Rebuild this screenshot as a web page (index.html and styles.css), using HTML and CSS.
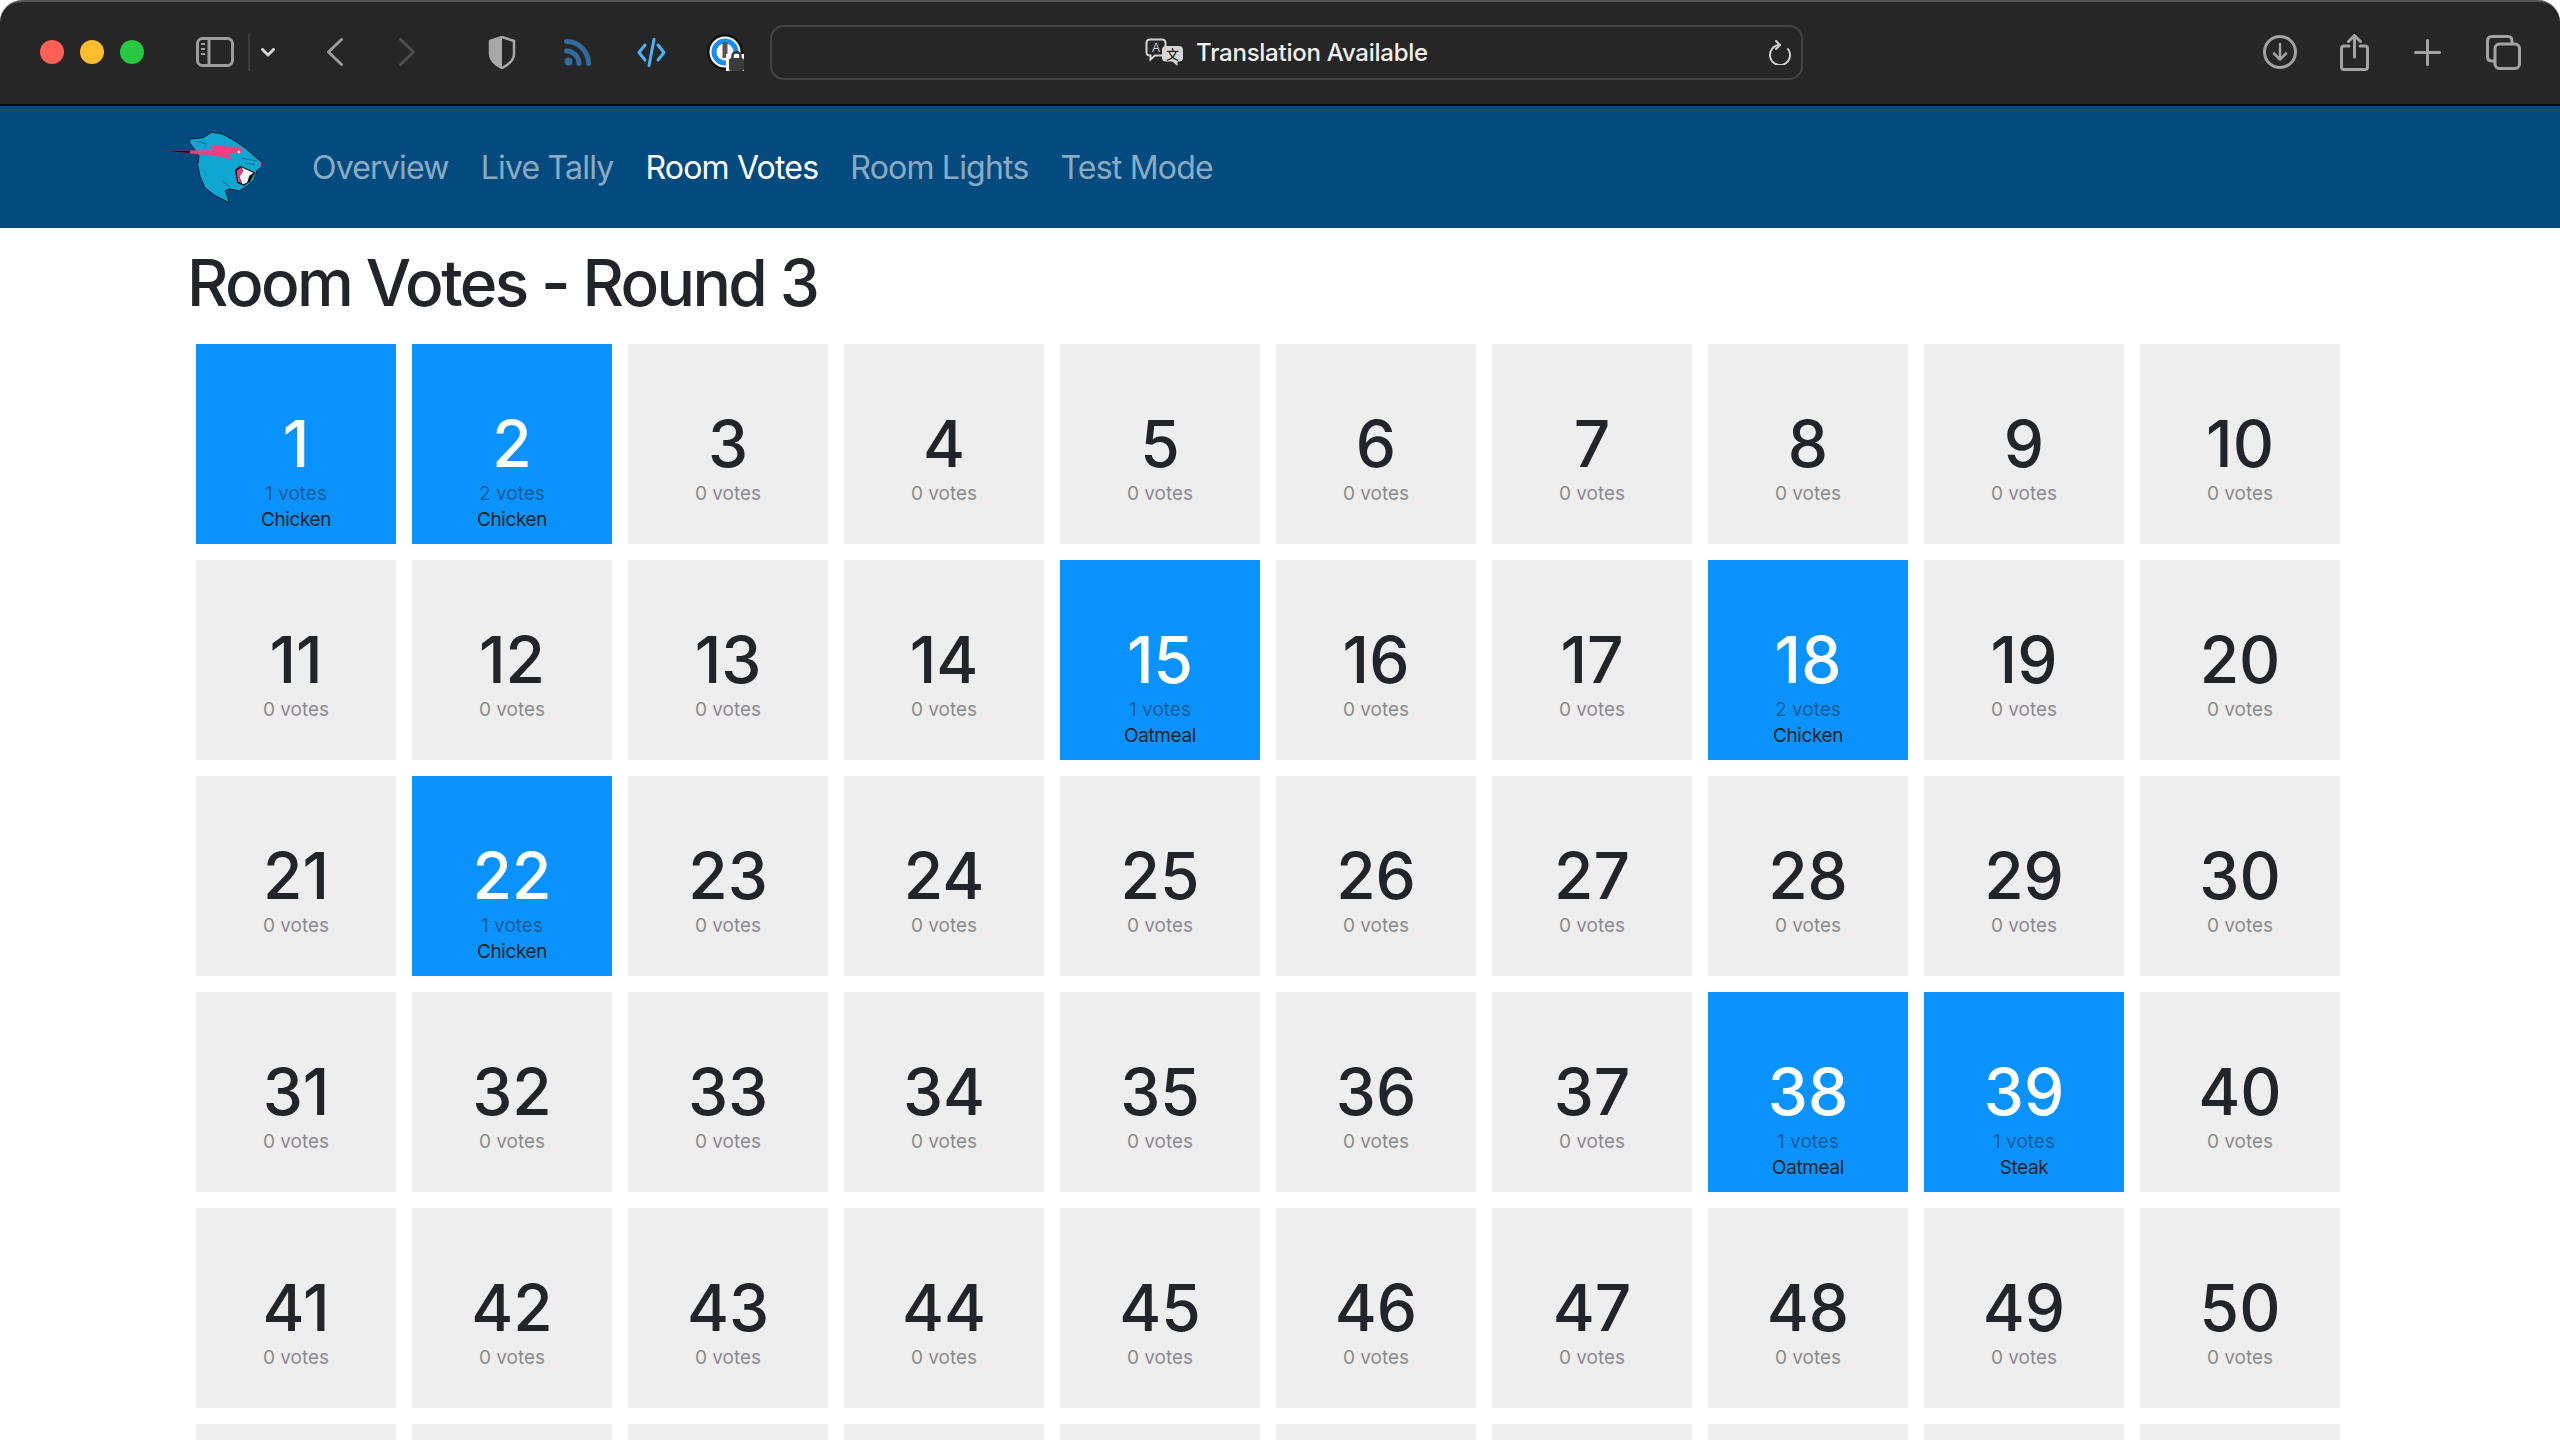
FILE: index.html
```html
<!DOCTYPE html>
<html lang="en">
    <head>
        <meta charset="UTF-8" />
        <title>Room Votes - Round 3</title>
        <link rel="stylesheet" href="styles.css">
    </head>
    <body>
        <header class="browser-bar">
            <div class="lights">
                <span class="light light-red"></span>
                <span class="light light-yellow"></span>
                <span class="light light-green"></span>
            </div>
            <svg class="icon-sidebar" width="38" height="30" viewBox="0 0 38 30" fill="none" stroke="#9c9c9c" stroke-width="3">
                <rect x="1.5" y="1.5" width="35" height="27" rx="5"/>
                <path d="M13 2V28"/>
                <path d="M5 7H9M5 12H9M5 17H9" stroke-width="2"/>
            </svg>
            <span class="bar-sep"></span>
            <svg class="icon-chevron" width="14" height="9" viewBox="0 0 14 9" fill="none" stroke="#d4d4d4" stroke-width="3" stroke-linecap="round" stroke-linejoin="round">
                <path d="M1.5 1.5L7 7L12.5 1.5"/>
            </svg>
            <svg class="icon-back" width="16" height="28" viewBox="0 0 16 28" fill="none" stroke="#9c9c9c" stroke-width="3" stroke-linecap="round" stroke-linejoin="round">
                <path d="M14.5 1.5L1.5 14L14.5 26.5"/>
            </svg>
            <svg class="icon-forward" width="16" height="28" viewBox="0 0 16 28" fill="none" stroke="#4d4d4d" stroke-width="3" stroke-linecap="round" stroke-linejoin="round">
                <path d="M1.5 1.5L14.5 14L1.5 26.5"/>
            </svg>
            <svg class="icon-shield" width="28" height="33" viewBox="0 0 28 33">
                <path d="M14 1L26 5V18C26 25 20 29 14 32C8 29 2 25 2 18V5Z" fill="none" stroke="#a8a8a8" stroke-width="2.5" stroke-linejoin="round"/>
                <path d="M14 1L2 5V18C2 25 8 29 14 32Z" fill="#a8a8a8"/>
            </svg>
            <svg class="icon-rss" width="27" height="27" viewBox="0 0 27 27" fill="none" stroke="#2f6b9c" stroke-width="5" stroke-linecap="round">
                <circle cx="4.5" cy="22.5" r="4" fill="#2f6b9c" stroke="none"/>
                <path d="M2.5 12A12.5 12.5 0 0 1 15 24.5"/>
                <path d="M2.5 2.5A22 22 0 0 1 24.5 24.5"/>
            </svg>
            <svg class="icon-code" width="29" height="29" viewBox="0 0 29 29" fill="none" stroke="#4ab4f5" stroke-width="3" stroke-linecap="round" stroke-linejoin="round">
                <path d="M8 7L2 14.5L8 22"/>
                <path d="M17 1.5L12 27.5"/>
                <path d="M21 7L27 14.5L21 22"/>
            </svg>
            <svg class="icon-onepass" width="37" height="37" viewBox="0 0 37 37">
                <circle cx="18" cy="18" r="18" fill="#111"/>
                <circle cx="18" cy="18" r="15.5" fill="#fff"/>
                <circle cx="18" cy="18" r="11" fill="#fff" stroke="#1b8cf2" stroke-width="5"/>
                <rect x="15.5" y="8" width="5" height="16" fill="#555"/>
                <path d="M19 37V20H37V37Z" fill="#fff"/>
                <rect x="22" y="24" width="15" height="13" rx="2.5" fill="#3a3a3a"/>
                <path d="M25.5 25V22a4 4 0 0 1 8 0V25" fill="none" stroke="#3a3a3a" stroke-width="2.5"/>
            </svg>
            <div class="url-bar">
                <span></span>
                <div class="url-text">
                    <svg width="39" height="28" viewBox="0 0 39 28">
                        <path d="M5 1.5H17C19 1.5 20.5 3 20.5 5V14C20.5 16 19 17.5 17 17.5H10L5.5 21.5V17.5H5C3 17.5 1.5 16 1.5 14V5C1.5 3 3 1.5 5 1.5Z" fill="#262626" stroke="#d0d0d0" stroke-width="2"/>
                        <text x="11" y="14" class="glyph-a">A</text>
                        <path d="M21 8H34C36.5 8 38 9.5 38 12V20C38 22.5 36.5 23.5 34 23.5H32.5V28L27.5 23.5H21C18.5 23.5 17 22.5 17 20V12C17 9.5 18.5 8 21 8Z" fill="#d6d6d6"/>
                        <text x="27.5" y="20.5" class="glyph-zh">文</text>
                    </svg>
                    <span>Translation Available</span>
                </div>
                <svg class="icon-reload" width="24" height="25" viewBox="0 0 24 25" fill="none" stroke="#d0d0d0" stroke-width="2" stroke-linecap="round" stroke-linejoin="round">
                    <path d="M13 5A10 10 0 1 0 21 9"/>
                    <path d="M9 1L13 5L9 9"/>
                </svg>
            </div>
            <svg class="icon-download" width="34" height="34" viewBox="0 0 34 34" fill="none" stroke="#a3a3a3" stroke-width="3" stroke-linecap="round" stroke-linejoin="round">
                <circle cx="17" cy="17" r="15.5"/>
                <path d="M17 9V24M11 18.5L17 24.5L23 18.5" stroke-width="2.5"/>
            </svg>
            <svg class="icon-share" width="29" height="37" viewBox="0 0 29 37" fill="none" stroke="#a3a3a3" stroke-width="3" stroke-linecap="round" stroke-linejoin="round">
                <path d="M9 12H4C2.5 12 1.5 13 1.5 14.5V33C1.5 34.5 2.5 35.5 4 35.5H25C26.5 35.5 27.5 34.5 27.5 33V14.5C27.5 13 26.5 12 25 12H20"/>
                <path d="M14.5 23V2M8.5 7.5L14.5 1.5L20.5 7.5"/>
            </svg>
            <svg class="icon-plus" width="27" height="27" viewBox="0 0 27 27" fill="none" stroke="#a3a3a3" stroke-width="3" stroke-linecap="round">
                <path d="M13.5 1.5V25.5M1.5 13.5H25.5"/>
            </svg>
            <svg class="icon-tabs" width="35" height="35" viewBox="0 0 35 35" fill="none" stroke="#a3a3a3" stroke-width="3" stroke-linejoin="round">
                <path d="M8 26H6C3 26 1.5 24.5 1.5 22V6C1.5 3 3 1.5 6 1.5H22C24.5 1.5 26 3 26 6V8"/>
                <rect x="9" y="9" width="24.5" height="24.5" rx="4.5"/>
            </svg>
        </header>

        <nav class="site-nav">
            <svg class="logo" width="104" height="75" viewBox="33 85 312 225">
                <path d="M118 112L160 108L185 92L215 96L250 115L285 138L315 165L338 183L335 195L320 208L312 235L293 252L268 268L240 262L226 266L238 303L195 282L165 258L150 225L143 190L147 165L135 145L120 125Z" fill="#0fa6d1" stroke="#07202e" stroke-width="3" stroke-linejoin="round"/>
                <path d="M135 118L168 126L165 140" fill="none" stroke="#07506e" stroke-width="2"/>
                <path d="M36 147L195 146L178 131L273 137L274 156L234 156L250 174L205 164Z" fill="#f0407f"/>
                <path d="M36 147L120 147L120 155Z" fill="#1a1020"/>
                <circle cx="267" cy="151" r="4" fill="#fff"/>
                <path d="M275 170L320 178M285 185L315 188M220 240L240 256" fill="none" stroke="#07506e" stroke-width="2"/>
                <path d="M255 205L270 192L315 212L300 240L282 252L262 245Z" fill="#111"/>
                <path d="M273 197L310 213L298 222L291 243L278 248L268 225L280 207Z" fill="#fff"/>
                <path d="M260 207L272 198L279 207L268 225L275 245L264 240Z" fill="#ec3f80"/>
                <path d="M330 180L340 186L332 193Z" fill="#c5255f"/>
            </svg>
            <a class="nav-link" href="#">Overview</a>
            <a class="nav-link" href="#">Live Tally</a>
            <a class="nav-link active" href="#">Room Votes</a>
            <a class="nav-link" href="#">Room Lights</a>
            <a class="nav-link" href="#">Test Mode</a>
        </nav>

        <main class="content">
            <h1>Room Votes - Round 3</h1>
            <div class="rooms">
                <div class="room voted"><div class="room-num">1</div><div class="room-votes">1 votes</div><div class="room-food">Chicken</div></div>
                <div class="room voted"><div class="room-num">2</div><div class="room-votes">2 votes</div><div class="room-food">Chicken</div></div>
                <div class="room"><div class="room-num">3</div><div class="room-votes">0 votes</div></div>
                <div class="room"><div class="room-num">4</div><div class="room-votes">0 votes</div></div>
                <div class="room"><div class="room-num">5</div><div class="room-votes">0 votes</div></div>
                <div class="room"><div class="room-num">6</div><div class="room-votes">0 votes</div></div>
                <div class="room"><div class="room-num">7</div><div class="room-votes">0 votes</div></div>
                <div class="room"><div class="room-num">8</div><div class="room-votes">0 votes</div></div>
                <div class="room"><div class="room-num">9</div><div class="room-votes">0 votes</div></div>
                <div class="room"><div class="room-num">10</div><div class="room-votes">0 votes</div></div>
                <div class="room"><div class="room-num">11</div><div class="room-votes">0 votes</div></div>
                <div class="room"><div class="room-num">12</div><div class="room-votes">0 votes</div></div>
                <div class="room"><div class="room-num">13</div><div class="room-votes">0 votes</div></div>
                <div class="room"><div class="room-num">14</div><div class="room-votes">0 votes</div></div>
                <div class="room voted"><div class="room-num">15</div><div class="room-votes">1 votes</div><div class="room-food">Oatmeal</div></div>
                <div class="room"><div class="room-num">16</div><div class="room-votes">0 votes</div></div>
                <div class="room"><div class="room-num">17</div><div class="room-votes">0 votes</div></div>
                <div class="room voted"><div class="room-num">18</div><div class="room-votes">2 votes</div><div class="room-food">Chicken</div></div>
                <div class="room"><div class="room-num">19</div><div class="room-votes">0 votes</div></div>
                <div class="room"><div class="room-num">20</div><div class="room-votes">0 votes</div></div>
                <div class="room"><div class="room-num">21</div><div class="room-votes">0 votes</div></div>
                <div class="room voted"><div class="room-num">22</div><div class="room-votes">1 votes</div><div class="room-food">Chicken</div></div>
                <div class="room"><div class="room-num">23</div><div class="room-votes">0 votes</div></div>
                <div class="room"><div class="room-num">24</div><div class="room-votes">0 votes</div></div>
                <div class="room"><div class="room-num">25</div><div class="room-votes">0 votes</div></div>
                <div class="room"><div class="room-num">26</div><div class="room-votes">0 votes</div></div>
                <div class="room"><div class="room-num">27</div><div class="room-votes">0 votes</div></div>
                <div class="room"><div class="room-num">28</div><div class="room-votes">0 votes</div></div>
                <div class="room"><div class="room-num">29</div><div class="room-votes">0 votes</div></div>
                <div class="room"><div class="room-num">30</div><div class="room-votes">0 votes</div></div>
                <div class="room"><div class="room-num">31</div><div class="room-votes">0 votes</div></div>
                <div class="room"><div class="room-num">32</div><div class="room-votes">0 votes</div></div>
                <div class="room"><div class="room-num">33</div><div class="room-votes">0 votes</div></div>
                <div class="room"><div class="room-num">34</div><div class="room-votes">0 votes</div></div>
                <div class="room"><div class="room-num">35</div><div class="room-votes">0 votes</div></div>
                <div class="room"><div class="room-num">36</div><div class="room-votes">0 votes</div></div>
                <div class="room"><div class="room-num">37</div><div class="room-votes">0 votes</div></div>
                <div class="room voted"><div class="room-num">38</div><div class="room-votes">1 votes</div><div class="room-food">Oatmeal</div></div>
                <div class="room voted"><div class="room-num">39</div><div class="room-votes">1 votes</div><div class="room-food">Steak</div></div>
                <div class="room"><div class="room-num">40</div><div class="room-votes">0 votes</div></div>
                <div class="room"><div class="room-num">41</div><div class="room-votes">0 votes</div></div>
                <div class="room"><div class="room-num">42</div><div class="room-votes">0 votes</div></div>
                <div class="room"><div class="room-num">43</div><div class="room-votes">0 votes</div></div>
                <div class="room"><div class="room-num">44</div><div class="room-votes">0 votes</div></div>
                <div class="room"><div class="room-num">45</div><div class="room-votes">0 votes</div></div>
                <div class="room"><div class="room-num">46</div><div class="room-votes">0 votes</div></div>
                <div class="room"><div class="room-num">47</div><div class="room-votes">0 votes</div></div>
                <div class="room"><div class="room-num">48</div><div class="room-votes">0 votes</div></div>
                <div class="room"><div class="room-num">49</div><div class="room-votes">0 votes</div></div>
                <div class="room"><div class="room-num">50</div><div class="room-votes">0 votes</div></div>
                <div class="room"></div>
                <div class="room"></div>
                <div class="room"></div>
                <div class="room"></div>
                <div class="room"></div>
                <div class="room"></div>
                <div class="room"></div>
                <div class="room"></div>
                <div class="room"></div>
                <div class="room"></div>
            </div>
        </main>
    </body>
</html>
```

FILE: styles.css
```css
html,
body {
    margin: 0;
    height: 1440px;
    overflow: hidden;
    background: #fff;
    font-family: Inter, "Noto Sans", sans-serif;
    color: #212529;
}

/* browser chrome */
.browser-bar {
    display: flex;
    align-items: center;
    box-sizing: border-box;
    height: 106px;
    padding: 0 0 2px 40px;
    background: #262626;
    border-top: 2px solid #555;
    border-bottom: 2px solid #0a0a0a;
    border-radius: 22px 22px 0 0;
}
.lights {
    display: flex;
    gap: 16px;
}
.light {
    width: 24px;
    height: 24px;
    border-radius: 50%;
}
.light-red {
    background: #ff5f57;
}
.light-yellow {
    background: #febc2e;
}
.light-green {
    background: #28c840;
}
.icon-sidebar {
    margin-left: 52px;
}
.bar-sep {
    width: 2px;
    height: 37px;
    margin-left: 14px;
    background: #3c3c3c;
}
.icon-chevron {
    margin-left: 11px;
}
.icon-back {
    margin-left: 52px;
}
.icon-forward {
    margin-left: 56px;
}
.icon-shield {
    margin-left: 73px;
}
.icon-rss {
    margin-left: 48px;
}
.icon-code {
    margin-left: 46px;
}
.icon-onepass {
    margin-left: 41px;
}
.url-bar {
    display: grid;
    grid-template-columns: 1fr auto 1fr;
    align-items: center;
    box-sizing: border-box;
    width: 1033px;
    height: 55px;
    margin-left: 26px;
    padding: 0 10px;
    border: 2px solid #424242;
    border-radius: 14px;
}
.url-text {
    display: flex;
    align-items: center;
    gap: 12px;
    font-size: 24px;
    font-weight: 500;
    letter-spacing: -0.25px;
    color: #f2f2f2;
}
.icon-reload {
    justify-self: end;
}
.glyph-a {
    font-family: "Liberation Sans", sans-serif;
    font-size: 12px;
    fill: #d0d0d0;
    text-anchor: middle;
}
.glyph-zh {
    font-family: "Noto Sans CJK SC", sans-serif;
    font-size: 13px;
    fill: #262626;
    text-anchor: middle;
}
.icon-download {
    margin-left: 460px;
}
.icon-share {
    margin-left: 43px;
}
.icon-plus {
    margin-left: 45px;
}
.icon-tabs {
    margin-left: 45px;
}

/* site nav */
.site-nav {
    display: flex;
    align-items: center;
    height: 122px;
    padding-left: 161px;
    background: #034a7e;
}
.logo {
    margin-right: 31px;
}
.nav-link {
    padding: 0 16px;
    font-size: 32px;
    letter-spacing: -0.8px;
    color: rgba(255, 255, 255, 0.55);
    text-decoration: none;
}
.nav-link.active {
    color: #fff;
}

/* page */
.content {
    height: 1212px;
    overflow: hidden;
    padding-left: 187px;
}
.content h1 {
    margin: 16px 0 23px;
    font-size: 64px;
    font-weight: 500;
    line-height: 77px;
    letter-spacing: -2.6px;
}
.rooms {
    display: grid;
    grid-template-columns: repeat(10, 200px);
    gap: 16px;
    margin-left: 9px;
}
.room {
    box-sizing: border-box;
    height: 200px;
    padding-top: 62px;
    text-align: center;
    background: #eee;
}
.room.voted {
    background: #0a93ff;
}
.room-num {
    font-size: 64px;
    font-weight: 550;
    line-height: 75px;
}
.room.voted .room-num {
    color: #fff;
    font-weight: 500;
}
.room-votes,
.room-food {
    font-size: 19px;
    line-height: 26px;
}
.room-votes {
    color: rgba(33, 37, 41, 0.5);
}
.room-food {
    letter-spacing: -0.4px;
}
```
